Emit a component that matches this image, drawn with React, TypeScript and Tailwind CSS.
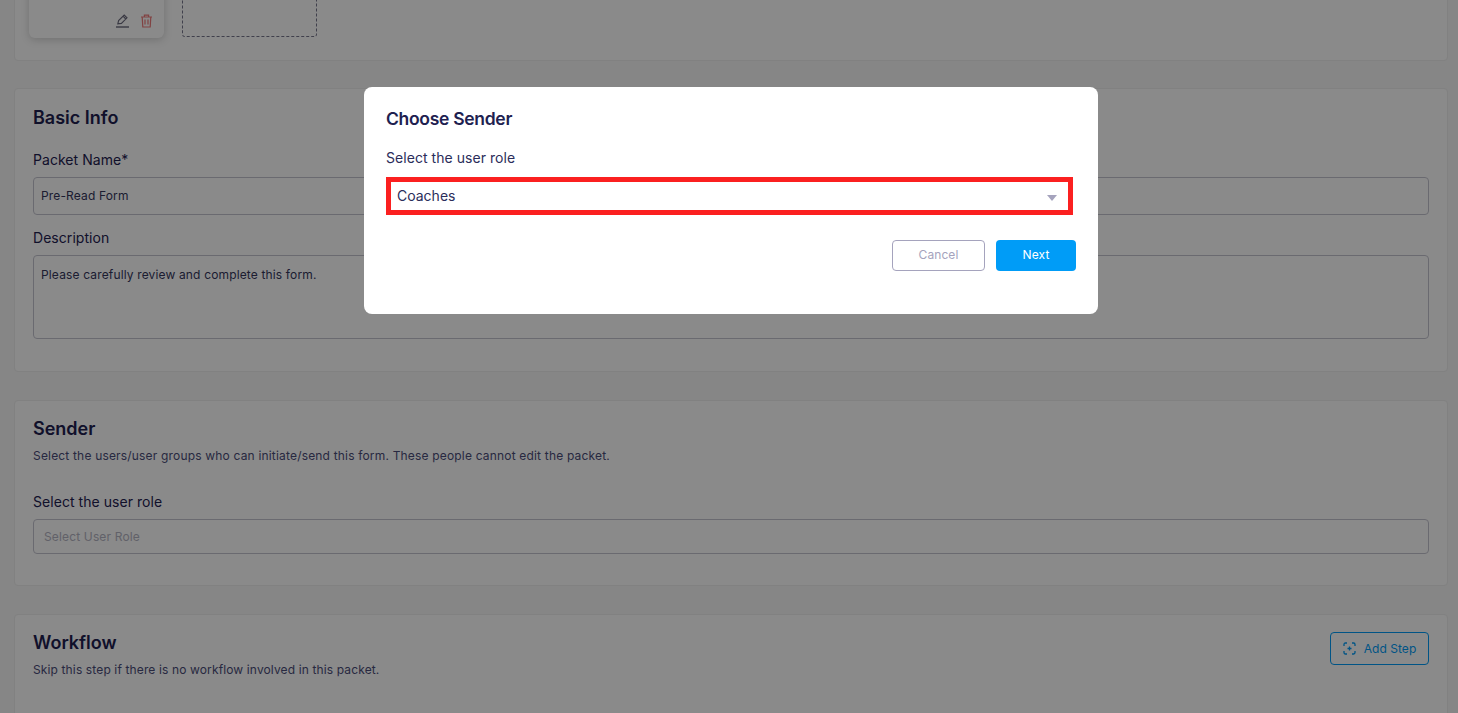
export default function App() {
  return (
    <div className="relative h-[713px] overflow-hidden bg-[#f7f7f7] text-[#1e2150]" style={{ fontFamily: "Inter, 'Noto Sans', sans-serif" }}>
      <div className="flex flex-col gap-[27px] px-[14px] pr-[10px] -mt-[60px]">
        <section className="h-[121px] rounded border border-[#eeeeee] bg-white px-[14px] flex gap-[18px]">
          <div className="mt-[-1px] h-[98px] w-[135px] rounded-md bg-white shadow-[0_2px_8px_rgba(0,0,0,0.18)] flex items-end justify-end gap-[10px] pr-[11px] pb-[10px]">
            <svg width="15" height="14" viewBox="0 0 15 14" fill="none" stroke="#6a697c" strokeWidth="1.1">
              <path d="M2.8 9.8 L3.6 6.6 L9.2 1 L12 3.8 L6.4 9.4 Z M8 2.2 L10.8 5" />
              <path d="M1 13 H14" strokeWidth="1.4" />
            </svg>
            <svg width="13" height="14" viewBox="0 0 13 14" fill="none" stroke="#ef7a7a" strokeWidth="1.2">
              <path d="M1 3 H12 M4.4 3 V1.2 H8.6 V3 M2.2 3 L2.8 13 H10.2 L10.8 3 M5 5.5 V10.5 M8 5.5 V10.5" />
            </svg>
          </div>
          <div className="mt-[-1px] h-[97px] w-[135px] rounded-[3px] border border-dashed border-[#77768c]" />
        </section>

        <section className="h-[284px] rounded border border-[#eeeeee] bg-white px-[18px] pt-[17px]">
          <h2 className="text-[18px] leading-[24px] font-semibold">Basic Info</h2>
          <label className="mt-[21px] block text-[14px] leading-[18px] tracking-[0.05px]">Packet Name*</label>
          <div className="mt-[8px] flex h-[38px] items-center rounded border border-[#c4c4d0] px-[7px] text-[12px] tracking-[0.15px] text-[#34365c]">Pre-Read Form</div>
          <label className="mt-[14px] block text-[14px] leading-[18px] tracking-[0.05px]">Description</label>
          <div className="mt-[8px] h-[84px] rounded border border-[#c4c4d0] px-[7px] pt-[11px] text-[12px] leading-[16px] tracking-[0.15px] text-[#34365c]">Please carefully review and complete this form.</div>
        </section>

        <section className="mt-px h-[186px] rounded border border-[#eeeeee] bg-white px-[18px] pt-[16px]">
          <h2 className="text-[18px] leading-[24px] font-semibold">Sender</h2>
          <p className="mt-[7px] text-[12px] leading-[16px] tracking-[0.18px] text-[#4a4c78]">Select the users/user groups who can initiate/send this form. These people cannot edit the packet.</p>
          <label className="mt-[29px] block text-[14px] leading-[18px] tracking-[0.05px]">Select the user role</label>
          <div className="mt-[8px] flex h-[35px] items-center rounded border border-[#c4c4d0] px-[10px] text-[12px] tracking-[0.15px] text-[#b4b4c2]">Select User Role</div>
        </section>

        <section className="mt-px h-[200px] rounded border border-[#eeeeee] bg-white px-[18px] pt-[16px]">
          <div className="flex items-start justify-between">
            <div>
              <h2 className="text-[18px] leading-[24px] font-semibold">Workflow</h2>
              <p className="mt-[7px] text-[12px] leading-[16px] tracking-[0.13px] text-[#4a4c78]">Skip this step if there is no workflow involved in this packet.</p>
            </div>
            <button className="mt-px flex h-[33px] w-[99px] items-center justify-center gap-[8px] rounded border border-[#009cf7] text-[12px] tracking-[0.05px] text-[#009cf7]">
              <svg width="13" height="13" viewBox="0 0 13 13" fill="none" stroke="#009cf7" strokeWidth="1.3">
                <path d="M1 4 V2.4 Q1 1 2.4 1 H4 M9 1 H10.6 Q12 1 12 2.4 V4 M12 9 V10.6 Q12 12 10.6 12 H9 M4 12 H2.4 Q1 12 1 10.6 V9 M6.5 4.5 V8.5 M4.5 6.5 H8.5" />
              </svg>
              Add Step
            </button>
          </div>
        </section>
      </div>

      <div className="fixed inset-0 flex justify-center bg-black/[0.46] pl-[4px] pt-[87px]">
        <div className="h-[227px] w-[734px] rounded-lg bg-white pl-[22px] pr-[22px] pt-[20px]">
          <h3 className="text-[17.5px] leading-[24px] font-semibold tracking-[-0.3px]">Choose Sender</h3>
          <label className="mt-[18px] block text-[14px] leading-[18px] tracking-[0.05px] text-[#2b2d5a]">Select the user role</label>
          <div className="mt-[10px] flex h-[38px] w-[687px] items-center justify-between border-[5px] border-[#fb2020] pb-[2px] pl-[6px] pr-[11px] text-[14px] text-[#2b2d5a]">
            <span>Coaches</span>
            <span className="mt-[5px] h-0 w-0 border-x-[5.5px] border-t-[6px] border-x-transparent border-t-[#a5a3bd]" />
          </div>
          <div className="mt-[25px] flex justify-end gap-[11px]">
            <button className="h-[31px] w-[93px] rounded border border-[#a5a3bd] pb-px text-[12px] tracking-[0.1px] text-[#a5a3bd]">Cancel</button>
            <button className="h-[31px] w-[80px] rounded bg-[#009cf7] pb-px text-[12px] tracking-[0.1px] text-white">Next</button>
          </div>
        </div>
      </div>
    </div>
  );
}
